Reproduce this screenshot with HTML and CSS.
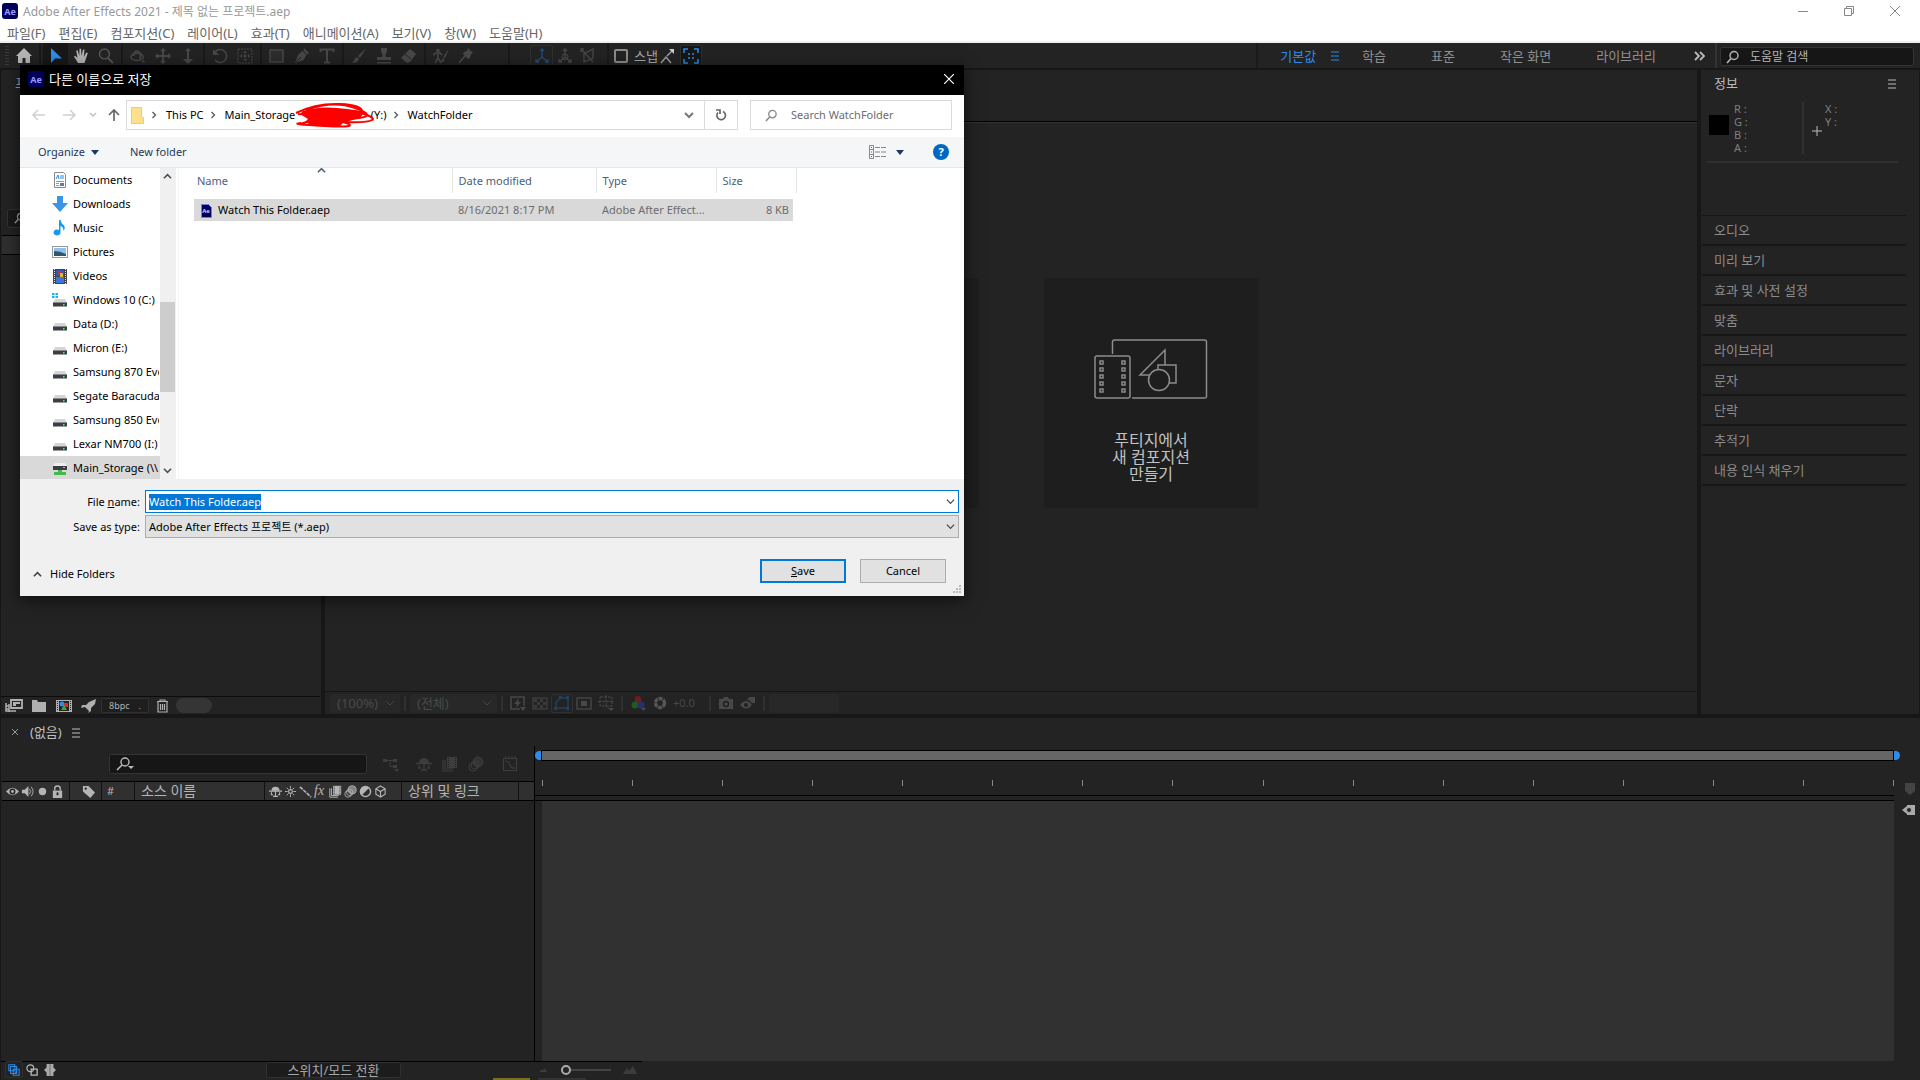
FILE: index.html
```html
<!DOCTYPE html>
<html lang="ko">
<head>
    <meta charset="UTF-8">
    <meta name="viewport" content="width=device-width, initial-scale=1.0">
    <title>Adobe After Effects 2021 - 제목 없는 프로젝트.aep</title>
    <link rel="stylesheet" href="styles.css">
</head>
<body>
    <!-- shared icons -->
    <svg class="sprite" aria-hidden="true">
        <symbol id="i-chev-right" viewBox="0 0 8 8"><path d="M2.5 1l3 3-3 3" fill="none" stroke="#555" stroke-width="1.3"/></symbol>
        <symbol id="i-chev-down" viewBox="0 0 10 10"><path d="M1 3l4 4 4-4" fill="none" stroke="currentColor" stroke-width="1.3"/></symbol>
        <symbol id="i-chev-up" viewBox="0 0 10 10"><path d="M1 7l4-4 4 4" fill="none" stroke="currentColor" stroke-width="1.8"/></symbol>
        <symbol id="i-caret" viewBox="0 0 8 5"><path d="M0 0h8L4 5z" fill="#1e395b"/></symbol>
        <symbol id="i-menu" viewBox="0 0 10 10"><path d="M1 1.5h8M1 5.5h8M1 9.5h8" stroke="currentColor"/></symbol>
        <symbol id="i-find" viewBox="0 0 14 14"><circle cx="8" cy="5.500" r="4" fill="none" stroke="currentColor" stroke-width="1.4"/><path d="M5 8.500L1 13" stroke="currentColor" stroke-width="1.6"/></symbol>
        <symbol id="i-ae" viewBox="0 0 16 16"><rect width="16" height="16" rx="3" fill="#00005b"/><text x="8" y="11.500" text-anchor="middle" font-size="9" font-weight="bold" fill="#9999ff">Ae</text></symbol>
        <symbol id="i-drive" viewBox="0 0 16 16"><path d="M3 7h10l2 4H1z" fill="#d3d5d8"/><rect x="1" y="10.500" width="14" height="4" fill="#3b3e42"/><rect x="11" y="12" width="1.500" height="1.500" fill="#3dff6b"/></symbol>
        <symbol id="i-eye" viewBox="0 0 14 14"><path d="M0 7q7-8 14 0-7 8-14 0z" fill="currentColor"/><circle cx="7" cy="7" r="3.200" fill="#222"/><circle cx="7" cy="7" r="1.600" fill="currentColor"/></symbol>
        <symbol id="i-layers" viewBox="0 0 16 16"><path d="M5 1h10v11H5z" fill="currentColor"/><path d="M6.500 2v9M13.500 2v9" stroke="#222" stroke-dasharray="1 1"/><path d="M1 4v11h10M3 4v9h9" fill="none" stroke="currentColor" stroke-width="1.2"/></symbol>
        <symbol id="i-blur" viewBox="0 0 16 16"><circle cx="5" cy="11" r="4" fill="none" stroke="currentColor"/><circle cx="7" cy="9" r="4" fill="none" stroke="currentColor"/><circle cx="10" cy="6" r="5" fill="currentColor" fill-opacity=".6" stroke="currentColor"/></symbol>
        <symbol id="i-shy" viewBox="0 0 16 16"><path d="M3 7a5 5 0 0 1 10 0z" fill="currentColor"/><path d="M0 7.500h16M8 3v11M3 9v3h2M13 9v3h-2M5 14h6" fill="none" stroke="currentColor" stroke-width="1.4"/></symbol>
    </svg>

    <header class="titlebar">
        <svg class="app-icon"><use href="#i-ae"/></svg>
        <h1>Adobe After Effects 2021 - 제목 없는 프로젝트.aep</h1>
        <div class="window-buttons">
            <button aria-label="최소화"><svg viewBox="0 0 10 10"><path d="M0 5.500h10" stroke="#888"/></svg></button>
            <button aria-label="이전 크기로"><svg viewBox="0 0 10 10"><path d="M.5 2.500h7v7h-7zM2.500 2V.5h7v7H8" fill="none" stroke="#888"/></svg></button>
            <button aria-label="닫기"><svg viewBox="0 0 10 10"><path d="M0 0l10 10M10 0L0 10" stroke="#888"/></svg></button>
        </div>
    </header>
    <nav class="menubar">
        <a href="#">파일(F)</a>
        <a href="#">편집(E)</a>
        <a href="#">컴포지션(C)</a>
        <a href="#">레이어(L)</a>
        <a href="#">효과(T)</a>
        <a href="#">애니메이션(A)</a>
        <a href="#">보기(V)</a>
        <a href="#">창(W)</a>
        <a href="#">도움말(H)</a>
    </nav>

    <div class="toolbar">
        <span class="grip"></span>
        <div class="tool-group bright">
            <button aria-label="홈"><svg viewBox="0 0 16 16"><path d="M8 0L0 8h2v7h4.500v-5h3v5H14V8h2z" fill="currentColor"/></svg></button>
        </div>
        <div class="tool-group bright">
            <button class="on" aria-label="선택 도구"><svg viewBox="0 0 16 16"><path d="M3 0v15l4-4.500h7z" fill="#2d8ceb"/></svg></button>
            <button aria-label="손 도구"><svg viewBox="0 0 16 16"><path d="M5 15L1 8.500l1.200-.8L4.500 10 3.200 2.500l1.400-.3L6.300 8 6.500.8h1.600L8.500 8 10 1.500l1.500.3L10.800 9l2.500-4.500 1.500.6L12.500 12l-1 3z" fill="currentColor"/></svg></button>
            <button class="dim" aria-label="확대/축소 도구"><svg viewBox="0 0 16 16"><circle cx="6.500" cy="6" r="5" fill="none" stroke="currentColor" stroke-width="1.500"/><path d="M10 10l5 5" stroke="currentColor" stroke-width="2"/></svg></button>
        </div>
        <div class="tool-group">
            <button aria-label="궤도"><svg viewBox="0 0 18 16"><ellipse cx="8" cy="9" rx="7" ry="4" fill="none" stroke="currentColor" stroke-width="1.600"/><path d="M4 8a4 5 0 1 1 7 3" fill="none" stroke="currentColor" stroke-width="2"/><path d="M15 12l2 3h-4z" fill="currentColor"/></svg></button>
            <button aria-label="팬"><svg viewBox="0 0 16 16"><path d="M8 2v12M2 8h12" stroke="currentColor" stroke-width="2"/><path d="M8 0l3 3H5zM8 16l3-3H5zM0 8l3-3v6zM16 8l-3-3v6z" fill="currentColor"/></svg></button>
            <button aria-label="돌리"><svg viewBox="0 0 16 16"><path d="M8 2v11" stroke="currentColor" stroke-width="2"/><path d="M8 0l3 3H5zM8 16l5-5H3z" fill="currentColor"/></svg></button>
        </div>
        <div class="tool-group">
            <button aria-label="회전"><svg viewBox="0 0 16 16"><path d="M3 4a6.500 6.500 0 1 1 0 8" fill="none" stroke="currentColor" stroke-width="1.500"/><path d="M1 1v6h6z" fill="currentColor"/></svg></button>
            <button aria-label="뒤로 팬"><svg viewBox="0 0 16 16"><rect x="1" y="1" width="14" height="14" fill="none" stroke="currentColor" stroke-dasharray="2 1"/><path d="M8 3l2 2H6zM8 13l2-2H6zM3 8l2-2v4zM13 8l-2-2v4z" fill="currentColor"/><circle cx="8" cy="8" r="1.500" fill="currentColor"/></svg></button>
        </div>
        <div class="tool-group">
            <button aria-label="사각형"><svg viewBox="0 0 16 16"><rect x="1" y="2" width="13" height="12" fill="#2d2d2d" stroke="currentColor" stroke-width="1.500"/></svg></button>
            <button aria-label="펜"><svg viewBox="0 0 16 16"><path d="M10 0l5 5-2 1.500-3.500-4zM8.500 3l4 4-3 5L1 15l3-8z" fill="currentColor"/><path d="M2 14l5-5" stroke="#232323"/></svg></button>
            <button aria-label="텍스트"><svg viewBox="0 0 16 16"><path d="M1.500 4V1.500h13V4M8 2v12M5 14.500h6" fill="none" stroke="currentColor" stroke-width="2"/></svg></button>
        </div>
        <div class="tool-group">
            <button aria-label="브러시"><svg viewBox="0 0 16 16"><path d="M15 0L7 8l2 2zM6 9l2 2c-1 3-4 4-7 4 2-1 2-5 5-6z" fill="currentColor"/></svg></button>
            <button aria-label="복제 도장"><svg viewBox="0 0 16 16"><path d="M5 0h6v3L9.500 6v3H15v3H1V9h5.500V6L5 3zM1 14h14v1.500H1z" fill="currentColor"/></svg></button>
            <button aria-label="지우개"><svg viewBox="0 0 16 16"><path d="M9 1l6 5-6 8-3 1-6-5z" fill="currentColor"/><path d="M4 6l6 5" stroke="#232323"/></svg></button>
        </div>
        <div class="tool-group tool-group-last">
            <button aria-label="로토 브러시"><svg viewBox="0 0 16 16"><circle cx="5" cy="2.500" r="1.800" fill="currentColor"/><path d="M0 7l3-2h4l2 2M5 5v5l3 5M5 10l-3 5" fill="none" stroke="currentColor" stroke-width="1.600"/><path d="M16 1l-6 8 2 1zM10 10l1.500 1.500q-1 3-4 3 1.500-3 2.500-4.500z" fill="currentColor"/></svg></button>
            <button aria-label="퍼펫 핀"><svg viewBox="0 0 16 16"><path d="M10 0l5 5-2 1-1 4-2 1-5-5 1-2 3-1z" fill="currentColor"/><path d="M7 8l-6 7" stroke="currentColor" stroke-width="1.600"/></svg></button>
        </div>
        <div class="tool-group tool-group-axis">
            <button class="boxed" aria-label="로컬 축"><svg viewBox="0 0 16 16"><path d="M8 1v8L2 14M8 9l6 5M6 3l2-2 2 2M2 11v3h3M14 11v3h-3" fill="none" stroke="#234d77" stroke-width="1.300"/></svg></button>
            <button aria-label="표준 축"><svg viewBox="0 0 16 16"><path d="M8 1v8L2 14M8 9l6 5M6 3l2-2 2 2M2 11v3h3M14 11v3h-3" fill="none" stroke="currentColor" stroke-width="1.300"/><circle cx="8" cy="9" r="3" fill="none" stroke="currentColor"/></svg></button>
            <button aria-label="보기 축"><svg viewBox="0 0 16 16"><path d="M1 1l12 13M13 1v9L4 14V6zM1 4V1h3" fill="none" stroke="currentColor" stroke-width="1.300"/></svg></button>
        </div>
        <div class="snap">
            <label><input type="checkbox"> 스냅</label>
            <button aria-label="가장자리"><svg viewBox="0 0 16 16"><path d="M1 15l5-6 5 6M7 8l6-6" fill="none" stroke="#aaa" stroke-width="1.300"/><path d="M9 1h5v5z" fill="#ccc"/></svg></button>
            <button class="boxed dark" aria-label="범위"><svg viewBox="0 0 16 16"><path d="M1 5V1h4M11 1h4v4M15 11v4h-4M5 15H1v-4M5 6h2M9 6h2M5 10h2M9 10h2" fill="none" stroke="#2d8ceb" stroke-width="1.500"/></svg></button>
        </div>
        <nav class="workspaces">
            <a class="current" href="#">기본값 <svg><use href="#i-menu"/></svg></a>
            <a href="#">학습</a>
            <a href="#">표준</a>
            <a href="#">작은 화면</a>
            <a href="#">라이브러리</a>
            <button aria-label="더 보기"><svg viewBox="0 0 12 10"><path d="M1 1l4 4-4 4M6 1l4 4-4 4" fill="none" stroke="#bbb" stroke-width="1.800"/></svg></button>
        </nav>
        <div class="help-search">
            <svg><use href="#i-find"/></svg>
            <input type="text" aria-label="도움말 검색" placeholder="도움말 검색">
        </div>
    </div>

    <div class="panels">
        <section class="panel project">
            <h2>프로젝트</h2>
            <div class="project-search"><svg><use href="#i-find"/></svg></div>
            <div class="project-head"></div>
            <div class="project-footer">
                <button aria-label="푸티지 해석"><svg viewBox="0 0 18 14"><path d="M6 1h11v8H6zM8 4h7M8 6h3" fill="none" stroke="currentColor" stroke-width="1.800"/><path d="M1 4v8h10M4 5v8M1 7h3M1 10h3" fill="none" stroke="currentColor" stroke-width="1.500"/></svg></button>
                <button aria-label="새 폴더"><svg viewBox="0 0 18 14"><path d="M2 1h5l1 2h8v10H2z" fill="currentColor"/></svg></button>
                <button aria-label="새 컴포지션"><svg viewBox="0 0 18 14"><rect x="1" y="1" width="16" height="12" fill="currentColor"/><rect x="4" y="2" width="10" height="10" fill="#222"/><path d="M2.500 2v10M15.500 2v10" stroke="#222" stroke-dasharray="1 1"/><circle cx="7" cy="5" r="2.500" fill="#2d8ceb"/><rect x="9" y="4" width="4" height="4" fill="#d03030"/><path d="M9 6l3 5H6z" fill="#2fae3f"/></svg></button>
                <button aria-label="프로젝트 설정"><svg viewBox="0 0 18 14"><path d="M16 0L9 3 6 6H2L1 9l4-1 4 4-1 2 3-2V9l4-4z" fill="currentColor"/></svg></button>
                <button class="bpc">8bpc <span>.</span></button>
                <button aria-label="삭제"><svg viewBox="0 0 14 14"><path d="M2 2.500h11M5 2V1h5v1M3 3v10h9V3M5.500 5v6M7.500 5v6M9.500 5v6" fill="none" stroke="currentColor" stroke-width="1.200"/></svg></button>
                <span class="pill"></span>
            </div>
        </section>

        <section class="panel comp">
            <div class="comp-tabs"></div>
            <div class="comp-cards">
                <div class="card"></div>
                <button class="card">
                    <svg viewBox="0 0 114 60"><g fill="none" stroke="#8c8c8c" stroke-width="1.500"><path d="M18.500 15V3q0-2 2-2h90q2 0 2 2v55q0 1-2 1H38"/><rect x="1" y="17" width="35" height="42" rx="2"/><path d="M55 36h-9l25-25v15M64 31v-5h18v18h-7"/><circle cx="65" cy="41" r="10.500"/><path d="M6 22h3v3H6zM6 29h3v3H6zM6 36h3v3H6zM6 43h3v3H6zM6 50h3v3H6zM28 22h3v3h-3zM28 29h3v3h-3zM28 36h3v3h-3zM28 43h3v3h-3zM28 50h3v3h-3z"/></g></svg>
                    <span>푸티지에서<br>새 컴포지션<br>만들기</span>
                </button>
            </div>
            <div class="comp-footer">
                <select class="zoom-select" aria-label="확대 비율"><option>(100%)</option></select>
                <i></i>
                <select class="res-select" aria-label="해상도"><option>(전체)</option></select>
                <i></i>
                <button aria-label="빠른 미리 보기"><svg viewBox="0 0 16 16"><path d="M14 11V2H1v12h9" fill="none" stroke="currentColor" stroke-width="1.500"/><path d="M9 3L4 9h3l-1 4 5-6H8zM10 12h6l-3 4z" fill="currentColor"/></svg></button>
                <button aria-label="투명 격자"><svg viewBox="0 0 16 16"><rect x="1" y="3" width="14" height="11" fill="none" stroke="currentColor"/><path d="M2 4h3v3H2zM8 4h3v3H8zM5 7h3v3H5zM11 7h3v3h-3zM2 10h3v3H2zM8 10h3v3H8z" fill="#3a3a3a"/></svg></button>
                <button class="boxed" aria-label="마스크 표시"><svg viewBox="0 0 16 16"><path d="M2 13V8q2-4 5-5h7v10z" fill="none" stroke="#23405f" stroke-width="1.500"/><path d="M0 12h3v3H0zM12 12h3v3h-3zM12 1h3v3h-3zM5 1h3v3H5z" fill="#23405f"/></svg></button>
                <button aria-label="관심 영역"><svg viewBox="0 0 16 16"><rect x="1" y="3" width="14" height="11" fill="none" stroke="currentColor" stroke-width="1.300"/><rect x="5" y="6" width="6" height="5" fill="currentColor"/></svg></button>
                <button aria-label="안내선"><svg viewBox="0 0 16 16"><path d="M2 2h12v9H2zM8 0v13M0 6.500h16" fill="none" stroke="currentColor" stroke-dasharray="3 1"/><path d="M10 13h6l-3 3z" fill="currentColor"/></svg></button>
                <i></i>
                <button aria-label="채널"><svg viewBox="0 0 16 16"><circle cx="8" cy="4.500" r="3.500" fill="#6b1f1f"/><circle cx="5" cy="10" r="3.500" fill="#205a20"/><circle cx="11" cy="10" r="3.500" fill="#26306b"/><path d="M11 13h5l-2.500 3z" fill="currentColor"/></svg></button>
                <button aria-label="노출 재설정"><svg viewBox="0 0 16 16"><circle cx="8" cy="8" r="4.500" fill="none" stroke="#555" stroke-width="3.500" stroke-dasharray="4 .8"/></svg></button>
                <span>+0.0</span>
                <i></i>
                <button aria-label="스냅숏"><svg viewBox="0 0 16 16"><path d="M1 4h4l1-2h4l1 2h4v10H1z" fill="currentColor"/><circle cx="8" cy="9" r="2.500" fill="none" stroke="#222" stroke-width="1.500"/></svg></button>
                <button aria-label="스냅숏 표시"><svg viewBox="0 0 16 16"><path d="M0 10q6-8 12 0-6 7-12 0z" fill="currentColor"/><circle cx="6" cy="10" r="2" fill="#222"/><path d="M6 4h2l1-2h6v6h-3q-2-3-6-4z" fill="currentColor"/></svg></button>
                <i></i>
                <span class="timecode"></span>
            </div>
        </section>

        <aside class="panel side">
            <div class="side-title">
                <h2>정보</h2>
                <button aria-label="패널 메뉴"><svg><use href="#i-menu"/></svg></button>
            </div>
            <div class="info">
                <span class="swatch"></span>
                <div class="rgba"><p>R :</p><p>G :</p><p>B :</p><p>A :</p></div>
                <svg class="cross" viewBox="0 0 10 10"><path d="M5 0v10M0 5h10" stroke="#bbb"/></svg>
                <div class="xy"><p>X :</p><p>Y :</p></div>
            </div>
            <ul>
                <li><a href="#">오디오</a></li>
                <li><a href="#">미리 보기</a></li>
                <li><a href="#">효과 및 사전 설정</a></li>
                <li><a href="#">맞춤</a></li>
                <li><a href="#">라이브러리</a></li>
                <li><a href="#">문자</a></li>
                <li><a href="#">단락</a></li>
                <li><a href="#">추적기</a></li>
                <li><a href="#">내용 인식 채우기</a></li>
            </ul>
        </aside>
    </div>

    <section class="timeline">
        <div class="timeline-tab">
            <button class="close-tab" aria-label="탭 닫기"><svg viewBox="0 0 6 6"><path d="M0 0l6 6M6 0L0 6" stroke="#999"/></svg></button>
            <h2>(없음)</h2>
            <button aria-label="타임라인 메뉴"><svg><use href="#i-menu"/></svg></button>
        </div>
        <div class="timeline-body">
            <div class="layers">
                <div class="layer-tools">
                    <div class="layer-search">
                        <svg viewBox="0 0 18 14"><circle cx="9" cy="5" r="4" fill="none" stroke="#bbb" stroke-width="1.400"/><path d="M6 8l-5 5" stroke="#bbb" stroke-width="1.600"/><path d="M12 9h6l-3 3z" fill="#bbb"/></svg>
                        <input type="text" aria-label="레이어 검색">
                    </div>
                    <button class="first" aria-label="컴포지션 흐름"><svg viewBox="0 0 16 16"><path d="M0 3h4v3H0zM10 3h4v3h-4zM10 9h4v3h-4z" fill="currentColor"/><path d="M4 4.500h6M7 5v5.500h3" fill="none" stroke="currentColor"/><path d="M11 13h5l-2 3z" fill="currentColor"/></svg></button>
                    <button aria-label="숨기기"><svg><use href="#i-shy"/></svg></button>
                    <button aria-label="프레임 혼합"><svg><use href="#i-layers"/></svg></button>
                    <button aria-label="동작 흐림"><svg><use href="#i-blur"/></svg></button>
                    <button class="last" aria-label="그래프 편집기"><svg viewBox="0 0 16 16"><path d="M1.500 2.500h13v12h-13zM3 5q4 0 5 4t5 3M4 0v2M7 0v2M10 0v2M13 0v2" fill="none" stroke="currentColor" stroke-width="1.200"/></svg></button>
                </div>
                <div class="layer-head">
                    <div class="cell c-av">
                        <svg><use href="#i-eye"/></svg>
                        <svg viewBox="0 0 14 14"><path d="M1 5h3l4-4v12L4 9H1z" fill="currentColor"/><path d="M9 4q3 3 0 6M11 2q4 5 0 10" fill="none" stroke="currentColor"/></svg>
                        <svg viewBox="0 0 14 14"><circle cx="7" cy="7" r="4" fill="currentColor"/></svg>
                        <svg viewBox="0 0 14 14"><path d="M2 6h10v8H2z" fill="currentColor"/><path d="M4 6V4a3 3 0 0 1 6 0v2" fill="none" stroke="currentColor" stroke-width="1.500"/><path d="M7 8v3" stroke="#222" stroke-width="2"/></svg>
                    </div>
                    <div class="cell c-tag"><svg viewBox="0 0 14 14"><path d="M1 1h6l7 7-5 6-8-7z" fill="currentColor"/><circle cx="4" cy="4" r="1.200" fill="#222"/></svg></div>
                    <div class="cell c-num">#</div>
                    <div class="cell c-name">소스 이름</div>
                    <div class="cell c-sw">
                        <svg><use href="#i-shy"/></svg>
                        <svg viewBox="0 0 14 14"><circle cx="7" cy="7" r="2" fill="none" stroke="currentColor" stroke-width="1.200"/><path d="M7 1v3M7 10v3M1 7h3M10 7h3M3 3l2 2M9 9l2 2M11 3L9 5M5 9l-2 2" stroke="currentColor"/></svg>
                        <svg viewBox="0 0 14 14"><path d="M1 2l12 11" stroke="currentColor" stroke-width="1.800" stroke-dasharray="4 1"/></svg>
                        <em>fx</em>
                        <svg><use href="#i-layers"/></svg>
                        <svg><use href="#i-blur"/></svg>
                        <svg viewBox="0 0 14 14"><circle cx="7" cy="7" r="5.500" fill="none" stroke="currentColor" stroke-width="1.500"/><path d="M3 11A5.500 5.500 0 0 1 11 3z" fill="currentColor"/></svg>
                        <svg viewBox="0 0 14 14"><path d="M7 1l5 3v6l-5 3-5-3V4zM2 4l5 3 5-3M7 7v6" fill="none" stroke="currentColor" stroke-width="1.200"/></svg>
                    </div>
                    <div class="cell c-parent">상위 및 링크</div>
                </div>
                <div class="layer-list"></div>
            </div>
            <div class="tracks">
                <div class="work-area"><b></b><span></span><b class="end"></b></div>
                <div class="ruler">
                    <i></i><i></i><i></i><i></i><i></i><i></i><i></i><i></i>
                    <i></i><i></i><i></i><i></i><i></i><i></i><i></i><i></i>
                </div>
                <div class="track-area"></div>
            </div>
            <div class="track-edge">
                <svg viewBox="0 0 12 12"><path d="M1 0h10v8l-5 4-5-4z" fill="#444"/></svg>
                <svg class="bin" viewBox="0 0 14 12"><path d="M5 1h8v10H5z" fill="#aaa"/><path d="M0 6l5-4v8z" fill="#aaa"/><circle cx="7" cy="6" r="2.500" fill="#232323" stroke="#aaa"/></svg>
            </div>
        </div>
        <div class="timeline-footer">
            <button class="boxed" aria-label="레이어 스위치 창"><svg viewBox="0 0 14 14"><path d="M1 1h7v7H1zM3 3h7v8H3zM6 6h7v7H6zM8 9.500h3M9.500 8v3" fill="none" stroke="#2d8ceb" stroke-width="1.200"/></svg></button>
            <button aria-label="전송 제어 창"><svg viewBox="0 0 14 14"><circle cx="5" cy="5" r="4" fill="none" stroke="#bbb" stroke-width="1.300"/><path d="M6 6h7v7H6z" fill="none" stroke="#bbb" stroke-width="1.500"/></svg></button>
            <button aria-label="시작/종료 창"><svg viewBox="0 0 14 14"><path d="M3 0h8v4l3 3-3 3v4H3v-4L0 7l3-3z" fill="#aaa"/><path d="M7 0v14" stroke="#666"/></svg></button>
            <button class="mode">스위치/모드 전환</button>
            <svg class="mtn mtn-small" viewBox="0 0 14 8"><path d="M0 8l4-4 2 1 3-3 4 6z" fill="#3c3c3c"/></svg>
            <input type="range" min="0" max="100" value="0" aria-label="타임라인 확대/축소">
            <svg class="mtn" viewBox="0 0 14 8"><path d="M0 8l4-6 2 3 4-5 4 8z" fill="#3c3c3c"/></svg>
        </div>
    </section>

    <!-- save as dialog -->
    <form class="dialog" role="dialog" aria-label="다른 이름으로 저장">
        <div class="dialog-title">
            <svg class="app-icon"><use href="#i-ae"/></svg>
            <h2>다른 이름으로 저장</h2>
            <button type="button" aria-label="닫기"><svg viewBox="0 0 10 10"><path d="M0 0l10 10M10 0L0 10" stroke="#fff" stroke-width="1.200"/></svg></button>
        </div>
        <div class="address-row">
            <button type="button" aria-label="Back"><svg viewBox="0 0 14 12"><path d="M13 6H1M6 1L1 6l5 5" fill="none" stroke="#d0d0d0" stroke-width="1.500"/></svg></button>
            <button type="button" aria-label="Forward"><svg viewBox="0 0 14 12"><path d="M1 6h12M8 1l5 5-5 5" fill="none" stroke="#d0d0d0" stroke-width="1.500"/></svg></button>
            <button type="button" class="recent" aria-label="Recent"><svg viewBox="0 0 14 12"><path d="M4 4l3 3 3-3" fill="none" stroke="#c0c0c0" stroke-width="1.500"/></svg></button>
            <button type="button" class="up" aria-label="Up"><svg viewBox="0 0 14 12"><path d="M7 12V1M2 6l5-5 5 5" fill="none" stroke="#666" stroke-width="1.700"/></svg></button>
            <div class="address">
                <svg class="folder" viewBox="0 0 14 17"><path d="M0 0h11v10h2v7H0z" fill="#ffe08a"/><path d="M.5.5h10v10h2v6H.5z" fill="none" stroke="#f3cf63"/></svg>
                <svg class="sep"><use href="#i-chev-right"/></svg>
                <a href="#">This PC</a>
                <svg class="sep"><use href="#i-chev-right"/></svg>
                <a href="#" class="crumb-drive"><span>Main_Storage</span><span>(Y:)</span>
                    <svg class="scribble" viewBox="0 0 80 26"><path d="M8 9q18-6 44-2l15 2-3 7-16 5-4 4-26-1-8-4 3-3-8-5z" fill="#fe0000"/><path d="M1 11q20-10 44-9t22 9-20 3M12 8q26-10 48-2t4 10-40 4M6 22q22-8 42-2t-18 4-24-3M3 12q14 0 22 4l-20 6M58 9q24 6 19 9t-27 2" fill="none" stroke="#fe0000" stroke-width="2"/></svg>
                </a>
                <svg class="sep"><use href="#i-chev-right"/></svg>
                <a href="#">WatchFolder</a>
                <button type="button" class="drop" aria-label="Previous locations"><svg viewBox="0 0 10 10"><path d="M1 3l4 4 4-4" fill="none" stroke="#777" stroke-width="2"/></svg></button>
                <button type="button" class="refresh" aria-label="Refresh"><svg viewBox="0 0 12 12"><path d="M8 2.500a4.300 4.300 0 1 1-5 1M1 1h4v4" fill="none" stroke="#666" stroke-width="1.700"/></svg></button>
            </div>
            <div class="folder-search">
                <svg><use href="#i-find"/></svg>
                <input type="text" aria-label="Search WatchFolder" placeholder="Search WatchFolder">
            </div>
        </div>
        <div class="command-row">
            <button type="button" class="organize">Organize <svg class="caret"><use href="#i-caret"/></svg></button>
            <button type="button">New folder</button>
            <button type="button" class="view" aria-label="View"><svg viewBox="0 0 18 14"><path d="M.5.5h4v13h-4zM.5 4.500h4M.5 9.500h4M6 2.500h5M12 2.500h5M6 7h5M12 7h5M6 11.500h5M12 11.500h5" fill="none" stroke="#888"/><path d="M2 2h1v1H2zM2 6.500h1v1H2z" fill="#36c"/><path d="M2 11h1v1H2z" fill="#c33"/></svg><svg class="caret"><use href="#i-caret"/></svg></button>
            <button type="button" class="help" aria-label="Help">?</button>
        </div>
        <div class="browser">
            <ul class="tree">
                <li><a href="#"><svg viewBox="0 0 16 16"><path d="M2.500.5h9l2 2v13h-11z" fill="#fff" stroke="#888"/><path d="M4 7l2-4 1 4M8 4h4M8 6h4" fill="none" stroke="#2a8ad4"/><path d="M4 9.500h8M4 11.500h3M4 13.500h3" stroke="#6aa"/><path d="M8 11h4v3H8z" fill="#67a"/></svg>Documents</a></li>
                <li><a href="#"><svg viewBox="0 0 16 16"><path d="M5 0h6v7h5l-8 9-8-9h5z" fill="#3a95e4"/></svg>Downloads</a></li>
                <li><a href="#"><svg viewBox="0 0 16 16"><path d="M7 0h1.500q.5 3 3 5t0 6q0-4-3-5v7a3.500 3 0 1 1-1.500-3z" fill="#149bf0"/></svg>Music</a></li>
                <li><a href="#"><svg viewBox="0 0 16 16"><rect x=".5" y="2.500" width="15" height="11" fill="#fff" stroke="#999"/><path d="M2 4h12v8H2z" fill="#8dc1ee"/><path d="M2 7q6 0 12 3v2H2z" fill="#31576d"/></svg>Pictures</a></li>
                <li><a href="#"><svg viewBox="0 0 16 16"><rect x="1" y="1" width="14" height="15" fill="#444"/><path d="M4 2h8v6H4z" fill="#3158b5"/><path d="M4 9h8v6H4z" fill="#4172d8"/><path d="M6 3h3v3H6z" fill="#c33"/><path d="M8 5h3v4H8z" fill="#e4b82a"/><path d="M2.500 1v15M13.500 1v15" stroke="#ddd" stroke-dasharray="1 1"/></svg>Videos</a></li>
                <li><a href="#"><svg viewBox="0 0 16 16"><use href="#i-drive"/><path d="M0 1h2.500v2H0zM3.500 1H6v2H3.500zM0 4h2.500v2H0zM3.500 4H6v2H3.500z" fill="#12b5ee"/></svg>Windows 10 (C:)</a></li>
                <li><a href="#"><svg><use href="#i-drive"/></svg>Data (D:)</a></li>
                <li><a href="#"><svg><use href="#i-drive"/></svg>Micron (E:)</a></li>
                <li><a href="#"><svg><use href="#i-drive"/></svg>Samsung 870 Evo</a></li>
                <li><a href="#"><svg><use href="#i-drive"/></svg>Segate Baracuda</a></li>
                <li><a href="#"><svg><use href="#i-drive"/></svg>Samsung 850 Evo</a></li>
                <li><a href="#"><svg><use href="#i-drive"/></svg>Lexar NM700 (I:)</a></li>
                <li class="selected"><a href="#"><svg viewBox="0 0 16 16"><path d="M3 3h10l2 3H1z" fill="#eee"/><path d="M1 6h14v4H1z" fill="#3b3e42"/><path d="M11 7h2v1h-2z" fill="#3dff6b"/><path d="M6 10h4v2h4v3H2v-3h4z" fill="#46b94e"/></svg>Main_Storage (\\</a></li>
            </ul>
            <div class="scrollbar">
                <button type="button" aria-label="Scroll up"><svg><use href="#i-chev-up"/></svg></button>
                <span class="thumb"></span>
                <button type="button" aria-label="Scroll down"><svg class="flip"><use href="#i-chev-up"/></svg></button>
            </div>
            <div class="files">
                <table>
                    <thead>
                        <tr>
                            <th class="col-name">Name <svg><use href="#i-chev-up"/></svg></th>
                            <th class="col-date">Date modified</th>
                            <th class="col-type">Type</th>
                            <th class="col-size">Size</th>
                        </tr>
                    </thead>
                    <tbody>
                        <tr>
                            <td><svg viewBox="0 0 12 14"><path d="M1.500.5h7l3 3v10h-10z" fill="#00005b" stroke="#7b7be8"/><text x="6" y="9" text-anchor="middle" font-size="6" font-weight="bold" fill="#ccf">Ae</text></svg>Watch This Folder.aep</td>
                            <td>8/16/2021 8:17 PM</td>
                            <td>Adobe After Effect...</td>
                            <td>8 KB</td>
                        </tr>
                    </tbody>
                </table>
            </div>
        </div>
        <div class="dialog-bottom">
            <div class="field">
                <label for="file-name">File <u>n</u>ame:</label>
                <div class="combo">
                    <input id="file-name" type="text" value="Watch This Folder.aep">
                    <svg><use href="#i-chev-down"/></svg>
                </div>
            </div>
            <div class="field">
                <label for="file-type">Save as <u>t</u>ype:</label>
                <div class="combo combo-type">
                    <select id="file-type"><option>Adobe After Effects 프로젝트 (*.aep)</option></select>
                    <svg><use href="#i-chev-down"/></svg>
                </div>
            </div>
            <div class="actions">
                <button type="button" class="hide-folders"><svg><use href="#i-chev-up"/></svg>Hide Folders</button>
                <button type="button" class="btn primary"><span><u>S</u>ave</span></button>
                <button type="button" class="btn">Cancel</button>
            </div>
            <svg class="resize" viewBox="0 0 8 8"><path d="M6 0h2v2H6zM3 3h2v2H3zM6 3h2v2H6zM0 6h2v2H0zM3 6h2v2H3zM6 6h2v2H6z" fill="#bbb"/></svg>
        </div>
    </form>

    <script>
        const fileName = document.getElementById('file-name');
        fileName.focus();
        fileName.select();
    </script>
</body>
</html>
```
FILE: styles.css
```css
* {
    box-sizing: border-box;
}
body {
    margin: 0;
    height: 100vh;
    display: flex;
    flex-direction: column;
    overflow: hidden;
    background-color: #171717;
    color: #a8a8a8;
    font-family: "Noto Sans", "Noto Sans CJK KR", sans-serif;
    font-size: 13px;
    line-height: 16px;
}
h1, h2, p, ul {
    margin: 0;
    padding: 0;
    font-size: inherit;
    font-weight: normal;
    list-style: none;
}
a {
    color: inherit;
    text-decoration: none;
}
button, input, select {
    font: inherit;
    color: inherit;
    background: none;
    border: none;
    padding: 0;
    margin: 0;
    outline: none;
    border-radius: 0;
}
button {
    display: flex;
    align-items: center;
    justify-content: center;
}
select {
    appearance: none;
}
svg {
    display: block;
    flex: none;
}
.sprite {
    position: absolute;
    width: 0;
    height: 0;
}

/* title and menu */
.titlebar {
    display: flex;
    align-items: center;
    height: 22px;
    padding-left: 2px;
    background-color: #fff;
    color: #999;
    font-size: 12px;
}
.app-icon {
    width: 16px;
    height: 16px;
}
.titlebar h1 {
    margin-left: 5px;
    padding-top: 2px;
}
.window-buttons {
    display: flex;
    margin-left: auto;
    padding-right: 2px;
}
.window-buttons button {
    width: 46px;
    height: 22px;
}
.window-buttons svg {
    width: 10px;
    height: 10px;
}
.menubar {
    display: flex;
    gap: 13px;
    height: 21px;
    padding: 3px 7px 0;
    background-color: #fff;
    border-bottom: 2px solid #f0f0f0;
    color: #666;
}

/* toolbar */
.toolbar {
    display: flex;
    flex: none;
    height: 25px;
    background-color: #232323;
}
.grip {
    width: 4px;
    margin: 3px 0 2px 5px;
    background: repeating-linear-gradient(#3a3a3a 0 1px, #232323 1px 3px);
}
.tool-group {
    display: flex;
    padding: 0 3px 0 2px;
    border-right: 2px solid #1a1a1a;
    color: #484848;
}
.tool-group button {
    width: 25px;
}
.tool-group svg, .snap button svg {
    width: 16px;
    height: 16px;
}
.bright {
    color: #b5b5b5;
}
.tool-group .dim {
    color: #555;
}
.on {
    background-color: #181818;
}
.boxed {
    border: 1px solid #303030;
    border-radius: 2px;
}
.tool-group-last {
    padding-right: 30px;
}
.tool-group-axis {
    padding: 2px 8px 2px 20px;
}
.tool-group-axis button {
    width: 23px;
}
.snap {
    display: flex;
    align-items: center;
    padding-left: 5px;
}
.snap label {
    display: flex;
    align-items: center;
    gap: 6px;
}
.snap input {
    appearance: none;
    width: 14px;
    height: 14px;
    border: 2px solid #8c8c8c;
    border-radius: 2px;
}
.snap button {
    width: 20px;
    height: 22px;
}
.snap .dark {
    width: 22px;
    background-color: #161616;
    margin-left: 2px;
}
.workspaces {
    display: flex;
    align-items: center;
    margin-left: auto;
    padding-left: 22px;
    border-left: 2px solid #1a1a1a;
    border-right: 2px solid #333;
    color: #909090;
}
.workspaces a {
    margin-right: 45px;
}
.workspaces a.current {
    display: flex;
    align-items: center;
    gap: 14px;
    margin-right: 22px;
    color: #2d8ceb;
}
.workspaces a.current svg {
    width: 10px;
    height: 11px;
}
.workspaces button {
    width: 10px;
    margin: 0 10px 0 -6px;
}
.workspaces button svg {
    width: 12px;
    height: 10px;
}
.help-search {
    display: flex;
    align-items: center;
    gap: 10px;
    width: 194px;
    margin: 4px 6px 2px 3px;
    padding: 0 5px;
    background-color: #161616;
    border: 1px solid #333;
    border-radius: 3px;
    color: #b5b5b5;
}
.help-search svg {
    width: 14px;
    height: 14px;
}
.help-search input {
    width: 140px;
    font-size: 12px;
}
.help-search input::placeholder {
    color: #b5b5b5;
}

/* panels */
.panels {
    display: flex;
    flex: none;
    gap: 4px;
    height: 650px;
    padding: 2px 1px 4px;
}
.panel {
    display: flex;
    flex-direction: column;
    background-color: #232323;
}
.project {
    width: 320px;
}
.project h2 {
    padding: 5px 0 0 14px;
}
.project-search {
    height: 19px;
    margin: 118px 8px 0 6px;
    padding: 2px 6px;
    background-color: #1a1a1a;
    border: 1px solid #333;
    border-radius: 3px;
}
.project-search svg {
    width: 12px;
    height: 12px;
}
.project-head {
    height: 20px;
    margin: 7px 1px 0;
    background-color: #2f2f2f;
    border-top: 1px solid #000;
    border-bottom: 1px solid #000;
}
.project-footer {
    display: flex;
    align-items: center;
    height: 18px;
    margin: auto 1px 0 0;
    border-top: 1px solid #0c0c0c;
    color: #b0b0b0;
}
.project-footer button {
    width: 25px;
}
.project-footer svg {
    width: 18px;
    height: 14px;
}
.project-footer .bpc {
    width: 48px;
    height: 15px;
    border: 1px solid #303030;
    border-radius: 2px;
    background-color: #1e1e1e;
    font-size: 9px;
    line-height: 12px;
    gap: 9px;
}
.pill {
    width: 36px;
    height: 15px;
    margin-left: 2px;
    border-radius: 8px;
    background-color: #353535;
}
.comp {
    flex: 1;
}
.comp-tabs {
    height: 53px;
    border-bottom: 1px solid #333;
    box-shadow: inset 0 -1px #000;
}
.comp-cards {
    flex: 1;
    display: flex;
    justify-content: center;
    align-items: center;
    gap: 65px;
    padding-bottom: 29px;
}
.card {
    display: flex;
    flex-direction: column;
    justify-content: flex-start;
    gap: 33px;
    width: 215px;
    height: 230px;
    padding-top: 61px;
    background-color: #1e1e1e;
    border-radius: 3px;
    color: #c2c2c2;
    font-size: 16px;
    line-height: 17px;
}
.card svg {
    width: 114px;
    height: 60px;
}
.comp-footer {
    display: flex;
    align-items: center;
    height: 23px;
    padding-left: 5px;
    border-top: 1px solid #171717;
    color: #484848;
}
.comp-footer select {
    height: 19px;
    padding: 0 7px;
    border-radius: 2px;
    background: #282828 url("data:image/svg+xml,%3Csvg xmlns='http://www.w3.org/2000/svg' width='10' height='6'%3E%3Cpath d='M1 1l4 4 4-4' fill='none' stroke='%23444'/%3E%3C/svg%3E") no-repeat right 5px center;
}
.zoom-select {
    width: 70px;
}
.res-select {
    width: 87px;
}
.comp-footer i {
    width: 2px;
    height: 15px;
    margin: 0 4px;
    background-color: #303030;
}
.comp-footer button {
    width: 22px;
    height: 19px;
}
.comp-footer svg {
    width: 16px;
    height: 16px;
}
.comp-footer span {
    width: 34px;
    padding-left: 2px;
    font-size: 11px;
}
.comp-footer .timecode {
    width: 70px;
    height: 19px;
    background-color: #282828;
    border-radius: 2px;
}

/* right column */
.side {
    width: 218px;
}
.side-title {
    display: flex;
    align-items: center;
    justify-content: space-between;
    height: 26px;
    padding: 0 22px 0 13px;
    color: #bbb;
}
.side-title svg, .timeline-tab svg {
    width: 10px;
    height: 11px;
}
.info {
    display: flex;
    height: 67px;
    margin: 0 21px 52px 6px;
    padding: 6px 0 0 2px;
    border-bottom: 2px solid #303030;
    color: #808080;
    font-size: 11px;
    line-height: 13px;
}
.swatch {
    width: 20px;
    height: 20px;
    margin: 13px 5px 0 0;
    background-color: #000;
}
.rgba {
    width: 70px;
    height: 52px;
    border-right: 2px solid #303030;
}
.cross {
    width: 10px;
    height: 10px;
    margin: 24px 3px 0 8px;
}
.side ul {
    margin: 0 13px 0 1px;
    border-top: 1px solid #171717;
}
.side li {
    height: 30px;
    padding: 6px 12px;
    border-bottom: 2px solid #171717;
    color: #8c8c8c;
}

/* timeline */
.timeline {
    flex: 1;
    display: flex;
    flex-direction: column;
    min-height: 0;
    margin-left: 1px;
    background-color: #232323;
}
.timeline-tab {
    display: flex;
    align-items: center;
    height: 28px;
    padding-left: 11px;
    color: #c0c0c0;
}
.timeline-tab h2 {
    margin: 0 9px 0 12px;
}
.timeline-tab .close-tab svg {
    width: 6px;
    height: 6px;
}
.timeline-body {
    flex: 1;
    display: flex;
    min-height: 0;
}
.layers {
    display: flex;
    flex-direction: column;
    width: 534px;
    border-right: 1px solid #000;
}
.layer-tools {
    display: flex;
    align-items: center;
    height: 35px;
    padding-left: 108px;
    color: #3d3d3d;
}
.layer-search {
    display: flex;
    align-items: center;
    gap: 6px;
    width: 258px;
    height: 20px;
    padding-left: 6px;
    background-color: #161616;
    border: 1px solid #333;
    border-radius: 2px;
}
.layer-search svg {
    width: 18px;
    height: 14px;
}
.layer-tools button {
    width: 26px;
}
.layer-tools button svg {
    width: 16px;
    height: 16px;
}
.layer-tools .first {
    margin: 0 7px 0 11px;
}
.layer-tools .last {
    margin-left: 8px;
}
.layer-head {
    display: flex;
    height: 20px;
    margin-left: 1px;
    background-color: #303030;
    border-top: 1px solid #000;
    border-bottom: 1px solid #000;
    color: #b5b5b5;
    font-size: 14px;
}
.cell {
    display: flex;
    align-items: center;
    border-right: 1px solid #111;
}
.cell svg {
    width: 13px;
    height: 13px;
}
.c-av {
    width: 68px;
    padding-left: 4px;
    gap: 2px;
}
.c-tag {
    width: 32px;
    padding-left: 12px;
}
.c-num {
    width: 33px;
    padding-left: 5px;
    font-size: 11px;
}
.c-name {
    width: 130px;
    padding-left: 6px;
}
.c-sw {
    width: 137px;
    padding-left: 4px;
    gap: 2px;
}
.c-sw em {
    width: 13px;
    font-family: "Liberation Serif", serif;
}
.c-parent {
    width: 117px;
    padding-left: 6px;
}
.tracks {
    flex: 1;
    display: flex;
    flex-direction: column;
}
.work-area {
    display: flex;
    height: 11px;
    margin: 4px -6px 0 0;
}
.work-area span {
    flex: 1;
    background-color: #666;
    border: 1px solid #000;
}
.work-area b {
    width: 6px;
    height: 9px;
    margin-top: 1px;
    background-color: #2d8ceb;
    border-radius: 6px 0 0 6px;
}
.work-area .end {
    border-radius: 0 6px 6px 0;
}
.ruler {
    display: flex;
    justify-content: space-between;
    height: 40px;
    padding: 19px 0 0 7px;
    border-bottom: 1px solid #000;
    box-shadow: inset 0 -4px #232323, inset 0 -5px #000;
}
.ruler i {
    width: 1px;
    height: 6px;
    background-color: #8a8a8a;
}
.track-area {
    flex: 1;
    margin-left: 7px;
    background-color: #313131;
}
.track-edge {
    width: 26px;
    padding: 37px 0 0 10px;
}
.track-edge svg {
    width: 12px;
    height: 12px;
    margin-bottom: 9px;
}
.track-edge .bin {
    width: 14px;
    margin-left: -2px;
}
.timeline-footer {
    display: flex;
    align-items: center;
    height: 19px;
    padding: 0 0 2px 4px;
    background:
        linear-gradient(#77701f, #77701f) no-repeat 492px bottom / 37px 2px,
        linear-gradient(#333, #333) no-repeat 537px bottom / 48px 2px,
        linear-gradient(#000, #000) no-repeat left top / 641px 1px;
}
.timeline-footer button {
    width: 18px;
    height: 17px;
}
.timeline-footer button svg {
    width: 12px;
    height: 12px;
}
.timeline-footer .mode {
    width: 135px;
    height: 16px;
    margin: 0 138px 0 207px;
    border: 1px solid #303030;
    border-radius: 2px;
    background-color: #1c1c1c;
}
.mtn {
    width: 14px;
    height: 8px;
}
.mtn-small {
    width: 9px;
    height: 5px;
}
.timeline-footer input {
    appearance: none;
    width: 50px;
    height: 2px;
    margin: 0 12px 0 13px;
    background-color: #444;
}
.timeline-footer input::-webkit-slider-thumb {
    appearance: none;
    width: 10px;
    height: 10px;
    border: 2px solid #aaa;
    border-radius: 50%;
    background-color: #232323;
}

/* save dialog */
.dialog {
    position: absolute;
    top: 65px;
    left: 20px;
    width: 944px;
    background-color: #fff;
    color: #000;
    font-size: 11px;
    box-shadow: 0 4px 16px rgba(0, 0, 0, 0.6);
}
.dialog-title {
    display: flex;
    align-items: center;
    height: 30px;
    padding: 0 10px 2px 8px;
    background-color: #000;
    color: #fff;
    font-size: 13px;
}
.dialog-title h2 {
    margin: 0 auto 0 5px;
}
.dialog-title button svg {
    width: 10px;
    height: 10px;
}
.address-row {
    display: flex;
    align-items: center;
    height: 42px;
    padding: 0 12px 2px 4px;
}
.address-row > button {
    width: 30px;
}
.address-row > .recent {
    width: 18px;
}
.address-row > .up {
    width: 24px;
}
.address-row > button svg {
    width: 14px;
    height: 12px;
}
.address {
    flex: 1;
    display: flex;
    align-items: center;
    height: 30px;
    padding-left: 4px;
    border: 1px solid #d9d9d9;
}
.folder {
    width: 14px;
    height: 17px;
}
.sep {
    width: 8px;
    height: 8px;
    margin: 0 8px 0 5px;
}
.crumb-drive {
    position: relative;
    display: flex;
    justify-content: space-between;
    width: 162px;
}
.scribble {
    position: absolute;
    top: -5px;
    left: 70px;
    width: 80px;
    height: 26px;
}
.drop {
    width: 30px;
    height: 28px;
    margin-left: auto;
}
.refresh {
    width: 33px;
    height: 28px;
    border-left: 1px solid #d9d9d9;
}
.drop svg {
    width: 10px;
    height: 10px;
}
.refresh svg {
    width: 12px;
    height: 12px;
}
.folder-search {
    display: flex;
    align-items: center;
    gap: 13px;
    width: 202px;
    height: 30px;
    margin-left: 12px;
    padding-left: 14px;
    border: 1px solid #d9d9d9;
    color: #888;
}
.folder-search svg {
    width: 13px;
    height: 13px;
}
.folder-search input::placeholder {
    color: #6d6d6d;
}
.command-row {
    display: flex;
    align-items: center;
    height: 31px;
    padding: 0 15px 0 18px;
    background-color: #f5f6f7;
    border-bottom: 1px solid #e6e6e6;
    color: #1e395b;
}
.organize {
    gap: 6px;
    margin-right: 31px;
}
.caret {
    width: 8px;
    height: 5px;
}
.view {
    gap: 9px;
    margin: 0 29px 0 auto;
}
.view svg:first-child {
    width: 18px;
    height: 14px;
}
.help {
    width: 16px;
    height: 16px;
    border-radius: 50%;
    background-color: #0067c5;
    color: #fff;
    font-weight: bold;
}
.browser {
    display: flex;
    height: 311px;
    overflow: hidden;
}
.tree {
    width: 140px;
    overflow: hidden;
    white-space: nowrap;
}
.tree li {
    height: 24px;
    padding: 4px 1px 4px 32px;
}
.tree li a {
    display: flex;
    gap: 5px;
    overflow: hidden;
}
.tree svg {
    width: 16px;
    height: 16px;
}
.tree .selected {
    background-color: #d9d9d9;
}
.scrollbar {
    display: flex;
    flex-direction: column;
    width: 17px;
    background-color: #f0f0f0;
    border-right: 1px solid #fff;
    color: #505050;
}
.scrollbar button {
    width: 15px;
    height: 17px;
}
.scrollbar svg {
    width: 9px;
    height: 9px;
}
.flip {
    transform: rotate(180deg);
}
.thumb {
    height: 90px;
    width: 15px;
    margin: 117px 0 auto;
    background-color: #cdcdcd;
}
.files {
    flex: 1;
    margin-left: 1px;
    padding-left: 15px;
    border-left: 1px solid #f5f5f5;
}
table {
    width: 602px;
    table-layout: fixed;
    border-collapse: collapse;
}
th {
    position: relative;
    height: 25px;
    padding: 0 0 0 6px;
    border-right: 1px solid #e5e5e5;
    color: #4c607a;
    font-weight: normal;
    text-align: left;
}
th svg {
    position: absolute;
    top: -2px;
    left: 123px;
    width: 9px;
    height: 9px;
}
.col-name {
    width: 258px;
    padding-left: 3px;
}
.col-date {
    width: 144px;
}
.col-type {
    width: 120px;
}
.col-size {
    width: 80px;
}
tbody::before {
    content: "";
    display: block;
    height: 6px;
}
td {
    height: 22px;
    padding: 0 0 0 6px;
    background-color: #d9d9d9;
    color: #6d6d6d;
}
td:first-child {
    color: #000;
}
td:last-child {
    padding-right: 4px;
    border-right: 6px solid #fff;
    text-align: right;
}
td svg {
    display: inline-block;
    width: 12px;
    height: 14px;
    margin-right: 6px;
    vertical-align: middle;
}
.dialog-bottom {
    position: relative;
    height: 117px;
    padding: 11px 5px 0 0;
    background-color: #f0f0f0;
}
.field {
    display: flex;
    align-items: center;
    height: 23px;
    margin-bottom: 2px;
}
.field label {
    width: 120px;
    margin-right: 5px;
    text-align: right;
}
.combo {
    flex: 1;
    display: flex;
    align-items: center;
    height: 23px;
    padding: 0 3px;
    border: 1px solid #0078d7;
    background-color: #fff;
}
.combo-type {
    border-color: #adadad;
    background-color: #e1e1e1;
}
.combo input, .combo select {
    flex: 1;
}
.combo svg {
    width: 9px;
    height: 9px;
    color: #444;
}
.combo input::selection {
    background-color: #0078d7;
    color: #fff;
}
.actions {
    display: flex;
    gap: 14px;
    padding: 19px 13px 0 0;
}
.hide-folders {
    gap: 8px;
    margin: 6px auto 0 13px;
}
.hide-folders svg {
    width: 9px;
    height: 9px;
    color: #444;
}
.btn {
    width: 86px;
    height: 24px;
    border: 1px solid #adadad;
    background-color: #e1e1e1;
}
.primary {
    border: 2px solid #0078d7;
}
.resize {
    position: absolute;
    right: 3px;
    bottom: 3px;
    width: 8px;
    height: 8px;
}
```
